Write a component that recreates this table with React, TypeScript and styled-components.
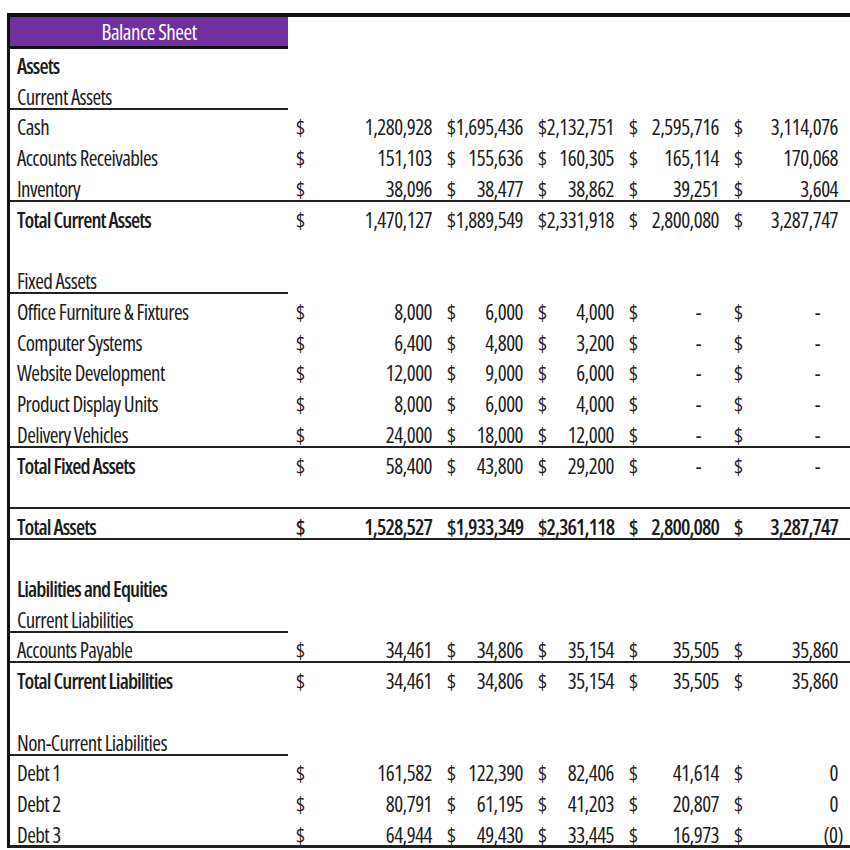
import styled, { createGlobalStyle } from 'styled-components'

const Global = createGlobalStyle`
  body {
    margin: 0;
    background: #fff;
    overflow: hidden;
  }
`

const Sheet = styled.div`
  padding: 13px 0 0 7px;
  width: 850px;
  box-sizing: border-box;
  overflow: hidden;
  font-family: "Open Sans", "Liberation Sans", sans-serif;
  font-stretch: 75%;
  font-size: 21px;
  letter-spacing: -0.5px;
  color: #1c1c1c;
`

const Frame = styled.div`
  border-top: 4px solid #111;
  border-left: 3px solid #111;
  width: 880px;
`

type Rule = 'none' | 'label' | 'full' | 'heavy'

const Row = styled.div<{ $rule?: Rule }>`
  display: grid;
  grid-template-columns: 278px 151px 91px 91px 105px 119px 1fr;
  height: 30.77px;
  box-sizing: border-box;
  line-height: 22px;
  border-bottom: ${(p) =>
    p.$rule === 'full' ? '2px solid #222' : p.$rule === 'heavy' ? '3px solid #222' : 'none'};
`

const Title = styled.div`
  background: #7030a0;
  color: #fff;
  font-weight: 500;
  text-align: center;
  padding-top: 4px;
  border-bottom: 3px solid #111;
  margin-bottom: -1px;
`

const Label = styled.div<{ $under?: boolean; $bold?: boolean }>`
  padding: 7px 0 0 7px;
  white-space: nowrap;
  font-weight: ${(p) => (p.$bold ? 600 : 400)};
  letter-spacing: ${(p) => (p.$bold ? '-0.9px' : '-0.6px')};
  border-bottom: ${(p) => (p.$under ? '2px solid #222' : 'none')};
  box-sizing: border-box;
`

const Money = styled.div<{ $bold?: boolean }>`
  display: flex;
  justify-content: space-between;
  padding: 7px 7px 0 8px;
  min-width: 0;
  white-space: nowrap;
  font-weight: ${(p) => (p.$bold ? 600 : 400)};
  letter-spacing: ${(p) => (p.$bold ? '-0.9px' : '-0.5px')};
`

const Dash = styled.span`
  margin-right: 18px;
`

const Neg = styled.span`
  margin-right: -5px;
`

type Line = {
  label: string
  values?: string[]
  bold?: boolean
  boldValues?: boolean
  rule?: Rule
  under?: boolean
}

const lines: Line[] = [
  { label: 'Assets', bold: true },
  { label: 'Current Assets', under: true },
  { label: 'Cash', values: ['1,280,928', '1,695,436', '2,132,751', '2,595,716', '3,114,076'] },
  {
    label: 'Accounts Receivables',
    values: ['151,103', '155,636', '160,305', '165,114', '170,068'],
  },
  {
    label: 'Inventory',
    values: ['38,096', '38,477', '38,862', '39,251', '3,604'],
    rule: 'full',
  },
  {
    label: 'Total Current Assets',
    bold: true,
    values: ['1,470,127', '1,889,549', '2,331,918', '2,800,080', '3,287,747'],
  },
  { label: '' },
  { label: 'Fixed Assets', under: true },
  { label: 'Office Furniture & Fixtures', values: ['8,000', '6,000', '4,000', '-', '-'] },
  { label: 'Computer Systems', values: ['6,400', '4,800', '3,200', '-', '-'] },
  { label: 'Website Development', values: ['12,000', '9,000', '6,000', '-', '-'] },
  { label: 'Product Display Units', values: ['8,000', '6,000', '4,000', '-', '-'] },
  {
    label: 'Delivery Vehicles',
    values: ['24,000', '18,000', '12,000', '-', '-'],
    rule: 'full',
  },
  { label: 'Total Fixed Assets', bold: true, values: ['58,400', '43,800', '29,200', '-', '-'] },
  { label: '', rule: 'full' },
  {
    label: 'Total Assets',
    bold: true,
    boldValues: true,
    values: ['1,528,527', '1,933,349', '2,361,118', '2,800,080', '3,287,747'],
    rule: 'full',
  },
  { label: '' },
  { label: 'Liabilities and Equities', bold: true },
  { label: 'Current Liabilities', under: true },
  {
    label: 'Accounts Payable',
    values: ['34,461', '34,806', '35,154', '35,505', '35,860'],
    rule: 'full',
  },
  {
    label: 'Total Current Liabilities',
    bold: true,
    values: ['34,461', '34,806', '35,154', '35,505', '35,860'],
  },
  { label: '' },
  { label: 'Non-Current Liabilities', under: true },
  { label: 'Debt 1', values: ['161,582', '122,390', '82,406', '41,614', '0'] },
  { label: 'Debt 2', values: ['80,791', '61,195', '41,203', '20,807', '0'] },
  {
    label: 'Debt 3',
    values: ['64,944', '49,430', '33,445', '16,973', '(0)'],
    rule: 'heavy',
  },
]

function Amount({ value, bold }: { value?: string; bold?: boolean }) {
  if (value === undefined) return <Money />
  let shown = <span>{value}</span>
  if (value === '-') shown = <Dash>-</Dash>
  if (value.startsWith('(')) shown = <Neg>{value}</Neg>
  return (
    <Money $bold={bold}>
      <span>$</span>
      {shown}
    </Money>
  )
}

export default function App() {
  return (
    <Sheet>
      <Global />
      <Frame>
        <Row>
          <Title>Balance Sheet</Title>
        </Row>
        {lines.map((l, i) => (
          <Row key={i} $rule={l.rule}>
            <Label $under={l.under} $bold={l.bold}>
              {l.label}
            </Label>
            {[0, 1, 2, 3, 4].map((c) => (
              <Amount key={c} value={l.values?.[c]} bold={l.boldValues} />
            ))}
          </Row>
        ))}
      </Frame>
    </Sheet>
  )
}
